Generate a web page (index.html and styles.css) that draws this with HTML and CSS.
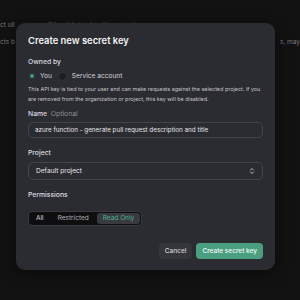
FILE: index.html
```html
<!DOCTYPE html>
<html lang="en">
<head>
  <meta charset="UTF-8" />
  <title>Create new secret key</title>
  <link rel="stylesheet" href="styles.css">
</head>
<body>
  <div class="backdrop">
    <div class="bg-line first">
      <span>ct ull</span>
      <span class="bg-mid">will be able to view the project</span>
    </div>
    <div class="bg-line">
      <span>cts b</span>
      <span>s, may</span>
    </div>
  </div>

  <div class="modal">
    <h2 class="modal-title">Create new secret key</h2>

    <div class="label">Owned by</div>
    <div class="radios">
      <label class="radio"><span class="dot checked"></span>You</label>
      <label class="radio"><span class="dot"></span>Service account</label>
    </div>
    <p class="hint">This API key is tied to your user and can make requests against the selected project. If you are removed from the organization or project, this key will be disabled.</p>

    <div class="label tight">Name <span class="muted">Optional</span></div>
    <div class="field">azure function - generate pull request description and title</div>

    <div class="label spaced">Project</div>
    <div class="field select">
      Default project
      <svg width="6" height="8" viewBox="0 0 6 8">
        <path d="M1.5 3 L3 1.5 L4.5 3 M1.5 5 L3 6.5 L4.5 5" fill="none" stroke="#c8c8cc" stroke-width="0.9" stroke-linecap="round" stroke-linejoin="round"/>
      </svg>
    </div>

    <div class="label spaced">Permissions</div>
    <div class="segments">
      <span class="seg">All</span>
      <span class="seg">Restricted</span>
      <span class="seg active">Read Only</span>
    </div>

    <div class="actions">
      <button class="btn cancel">Cancel</button>
      <button class="btn primary">Create secret key</button>
    </div>
  </div>
</body>
</html>
```

FILE: styles.css
```css
body {
  margin: 0;
  width: 300px;
  height: 300px;
  overflow: hidden;
  background-color: #121213;
  font-family: "Inter", "Noto Sans", sans-serif;
  color: #ececf1;
  position: relative;
}

.backdrop {
  padding-top: 21px;
}

.bg-line {
  display: flex;
  justify-content: space-between;
  margin-bottom: 9px;
  font-size: 6.5px;
  line-height: 8px;
  color: #7c7c80;
  white-space: nowrap;
}

.bg-line.first {
  justify-content: flex-start;
  gap: 28px;
}

.modal {
  position: absolute;
  top: 23px;
  left: 16px;
  width: 235px;
  padding: 12px 12px 11px 12px;
  background-color: #2b2c31;
  border-radius: 9px;
  box-shadow: 0 4px 18px rgba(0, 0, 0, 0.45);
}

.modal-title {
  margin: 0 0 10px 0;
  font-size: 9.4px;
  font-weight: 600;
  line-height: 12px;
  color: #f2f2f4;
}

.label {
  font-size: 6.8px;
  font-weight: 500;
  line-height: 10px;
  color: #dcdce0;
  margin-bottom: 4px;
}

.label.tight {
  margin-bottom: 3px;
}

.label.spaced {
  margin-top: 10px;
}

.muted {
  color: #8d8e94;
  font-weight: 400;
  margin-left: 2px;
}

.radios {
  display: flex;
  gap: 6px;
  align-items: center;
  margin-bottom: 3px;
}

.radio {
  display: flex;
  align-items: center;
  gap: 5px;
  font-size: 6.6px;
  line-height: 10px;
  color: #d4d4d8;
}

.dot {
  width: 7px;
  height: 7px;
  border-radius: 50%;
  background-color: #1c1d20;
  border: 1px solid #34353a;
}

.dot.checked {
  background-color: #4aa383;
  border: 1.5px solid #1c1d20;
  box-shadow: 0 0 0 0.5px #3a3b40;
  width: 4px;
  height: 4px;
  margin-left: 1px;
}

.hint {
  margin: 0 0 5px 0;
  font-size: 5.45px;
  line-height: 10px;
  color: #c4c4c9;
}

.field {
  box-sizing: border-box;
  height: 16px;
  border: 1px solid #44454b;
  border-radius: 5px;
  padding: 0 6px;
  font-size: 6.3px;
  color: #e6e6ea;
  display: flex;
  align-items: center;
  justify-content: space-between;
}

.field.select {
  height: 18px;
  font-size: 6.6px;
  padding: 0 7px;
}

.segments {
  display: inline-flex;
  align-items: center;
  box-sizing: border-box;
  height: 15px;
  background-color: #0e0e10;
  border: 1px solid #3a3b40;
  border-radius: 4px;
  padding: 1px;
  gap: 2px;
}

.seg {
  font-size: 6.5px;
  line-height: 11px;
  padding: 0 6px;
  color: #b4b4ba;
  border-radius: 3px;
}

.seg:first-child {
  color: #d8d8dc;
}

.seg.active {
  background-color: #393a40;
  color: #4fb08b;
}

.actions {
  display: flex;
  justify-content: flex-end;
  gap: 4px;
  margin-top: 17px;
}

.btn {
  font-family: inherit;
  font-size: 6.5px;
  font-weight: 500;
  height: 16px;
  padding: 0 6px;
  border: none;
  border-radius: 4px;
  cursor: pointer;
}

.cancel {
  background-color: #35363c;
  color: #d4d4d8;
}

.primary {
  background-color: #4a9f80;
  color: #f4fbf8;
}
```
